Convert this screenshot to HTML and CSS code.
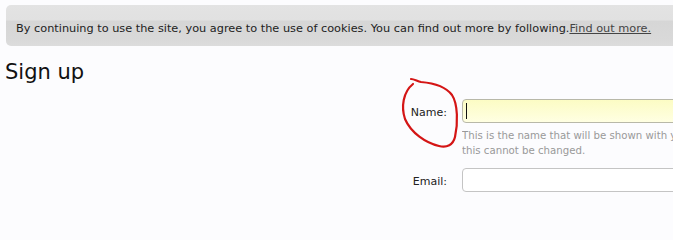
FILE: index.html
```html
<!DOCTYPE html>
<html>
<head>
<meta charset="utf-8">
<link rel="stylesheet" href="styles.css">
</head>
<body>
<div class="notice">By continuing to use the site, you agree to the use of cookies. You can find out more by following.<a href="#">Find out more.</a></div>
<h1 class="title">Sign up</h1>
<form class="form">
  <label class="label" for="name">Name:</label>
  <div class="ctrl">
    <div class="input focused" id="name"><span class="caret"></span></div>
    <p class="hint">This is the name that will be shown with your messages. Once selected,<br>this cannot be changed.</p>
  </div>
  <label class="label" for="email">Email:</label>
  <div class="ctrl">
    <div class="input" id="email"></div>
  </div>
</form>
<svg class="scribble" width="673" height="203" viewBox="0 0 673 203">
  <path d="M411 79 C414 79 417 81 421 82 C433 83 446 87 452 95 C458 104 458 124 455 137 C453 145 447 148 439 146 C426 143 411 133 405 119 C401 107 403 92 413 84" fill="none" stroke="#d41515" stroke-width="2.2" stroke-linecap="round"/>
</svg>
</body>
</html>
```
FILE: styles.css
```css
html, body {
  margin: 0;
  padding: 0;
}
html {
  overflow: hidden;
  background: #fcfcfe;
}
body {
  width: 673px;
  height: 203px;
  overflow: hidden;
  background: #fcfcfe;
  font-family: "DejaVu Sans", sans-serif;
  color: #222;
  position: relative;
}
.notice {
  margin: 5px 0 0 6px;
  height: 41px;
  box-sizing: border-box;
  padding: 6px 0 0 10px;
  border-radius: 5px 0 0 5px;
  background: linear-gradient(#e3e3e3 0%, #e1e1e1 36%, #d6d6d6 40%, #d9d9d9 85%, #dcdcdc 100%);
  font-size: 11.3px;
  line-height: 35px;
  color: #222;
  white-space: nowrap;
  overflow: hidden;
}
.notice a {
  color: #444;
  text-decoration: underline;
}
.title {
  margin: 12px 0 0 5px;
  font-size: 21px;
  font-weight: normal;
  line-height: 28px;
  color: #111;
}
.form {
  display: grid;
  grid-template-columns: 447px minmax(0, 1fr);
  column-gap: 15px;
  row-gap: 10px;
  margin-top: 13px;
}
.label {
  justify-self: end;
  font-size: 11px;
  line-height: 24px;
  padding-top: 2px;
  color: #222;
}
.ctrl {
  display: flex;
  flex-direction: column;
  overflow: hidden;
  min-width: 0;
}
.input {
  flex: none;
  width: 360px;
  height: 24px;
  box-sizing: border-box;
  border: 1px solid #c4c4c4;
  border-radius: 4px;
  background: #fff;
  position: relative;
}
.input.focused {
  border-color: #b8b8a8;
  background: linear-gradient(#fcfcc4, #ffffe2);
}
.caret {
  position: absolute;
  left: 3px;
  top: 3px;
  width: 1px;
  height: 16px;
  background: #111;
}
.hint {
  margin: 5px 0 0;
  font-size: 10.2px;
  line-height: 15px;
  color: #999;
  white-space: nowrap;
}
.scribble {
  position: absolute;
  left: 0;
  top: 0;
  pointer-events: none;
}
```
